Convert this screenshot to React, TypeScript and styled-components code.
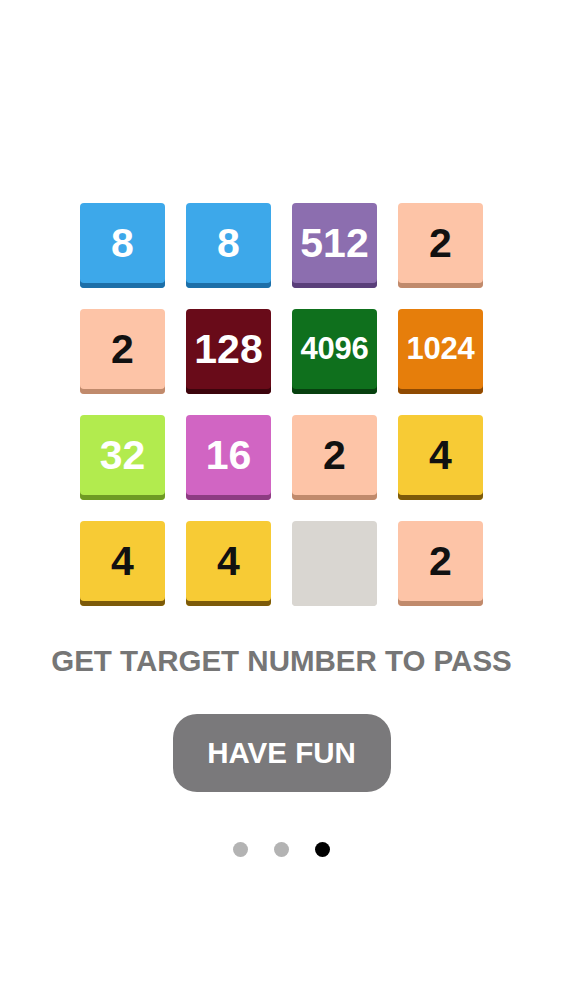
import React from 'react';
import styled, { createGlobalStyle } from 'styled-components';

const GlobalStyle = createGlobalStyle`
  body {
    margin: 0;
    background: #ffffff;
    font-family: 'Liberation Sans', Arial, sans-serif;
  }
`;

const Page = styled.div`
  width: 563px;
  height: 1000px;
  display: flex;
  flex-direction: column;
  align-items: center;
  padding-top: 203px;
  box-sizing: border-box;
`;

const Board = styled.div`
  display: grid;
  grid-template-columns: repeat(4, 85px);
  grid-auto-rows: 85px;
  gap: 21px;
`;

const Tile = styled.div<{ $bg: string; $edge: string; $fg: string; $small?: boolean }>`
  box-sizing: border-box;
  height: 85px;
  border-radius: 4px;
  background: ${(p) => p.$bg};
  box-shadow: inset 0 -5px 0 ${(p) => p.$edge};
  padding-bottom: 5px;
  display: flex;
  align-items: center;
  justify-content: center;
  color: ${(p) => p.$fg};
  font-weight: bold;
  font-size: ${(p) => (p.$small ? '31px' : '41px')};
  letter-spacing: ${(p) => (p.$small ? '-0.3px' : '0')};
`;

const Title = styled.div`
  margin-top: 37px;
  font-size: 29.5px;
  line-height: 36px;
  font-weight: bold;
  color: #767676;
  white-space: nowrap;
`;

const FunButton = styled.button`
  margin-top: 35px;
  width: 218px;
  height: 78px;
  border: none;
  border-radius: 24px;
  background: #7a797b;
  color: #ffffff;
  font-family: 'Liberation Sans', Arial, sans-serif;
  font-weight: bold;
  font-size: 29.5px;
  padding: 0;
`;

const Dots = styled.div`
  margin-top: 50px;
  display: flex;
  gap: 26px;
`;

const Dot = styled.span<{ $active?: boolean }>`
  width: 15px;
  height: 15px;
  border-radius: 50%;
  background: ${(p) => (p.$active ? '#000000' : '#b3b3b3')};
`;

type TTile = { v: string; bg: string; edge: string; fg: string };

const peach = { bg: '#fdc4a7', edge: '#c08a6c', fg: '#111111' };
const yellow = { bg: '#f7cb35', edge: '#7c5a0a', fg: '#111111' };
const blue = { bg: '#3da8ea', edge: '#1d6fa8', fg: '#ffffff' };

const tiles: TTile[] = [
  { v: '8', ...blue },
  { v: '8', ...blue },
  { v: '512', bg: '#8c6eaf', edge: '#5a3f7a', fg: '#ffffff' },
  { v: '2', ...peach },
  { v: '2', ...peach },
  { v: '128', bg: '#690b19', edge: '#3c040c', fg: '#ffffff' },
  { v: '4096', bg: '#0f701d', edge: '#07400f', fg: '#ffffff' },
  { v: '1024', bg: '#e67e0b', edge: '#8f4a02', fg: '#ffffff' },
  { v: '32', bg: '#b2eb4e', edge: '#6f9a24', fg: '#ffffff' },
  { v: '16', bg: '#d165c3', edge: '#8d3c82', fg: '#ffffff' },
  { v: '2', ...peach },
  { v: '4', ...yellow },
  { v: '4', ...yellow },
  { v: '4', ...yellow },
  { v: '', bg: '#d9d6d1', edge: '#d9d6d1', fg: '#111111' },
  { v: '2', ...peach },
];

function App() {
  return (
    <>
      <GlobalStyle />
      <Page>
        <Board>
          {tiles.map((t, i) => (
            <Tile key={i} $bg={t.bg} $edge={t.edge} $fg={t.fg} $small={t.v.length > 3}>
              {t.v}
            </Tile>
          ))}
        </Board>
        <Title>GET TARGET NUMBER TO PASS</Title>
        <FunButton>HAVE FUN</FunButton>
        <Dots>
          <Dot />
          <Dot />
          <Dot $active />
        </Dots>
      </Page>
    </>
  );
}

export default App;
